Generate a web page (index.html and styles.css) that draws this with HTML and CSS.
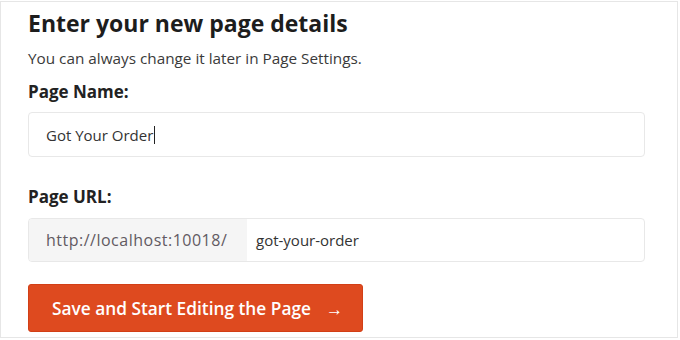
FILE: index.html
```html
<!DOCTYPE html>
<html lang="en">
<head>
    <meta charset="UTF-8">
    <title>Page details</title>
    <link rel="stylesheet" href="styles.css">
</head>
<body>
    <div class="painel">
        <h2 class="titulo">Enter your new page details</h2>
        <p class="subtitulo">You can always change it later in Page Settings.</p>

        <label class="rotulo">Page Name:</label>
        <div class="campo">
            <span class="valor">Got Your Order</span><span class="cursor"></span>
        </div>

        <label class="rotulo rotulo-url">Page URL:</label>
        <div class="campo campo-url">
            <span class="prefixo">http://localhost:10018/</span>
            <span class="valor-url">got-your-order</span>
        </div>

        <button class="salvar">Save and Start Editing the Page <span class="seta">&rarr;</span></button>
    </div>
</body>
</html>
```

FILE: styles.css
```css
body {
    margin: 0;
    padding: 0;
    background-color: #ffffff;
    font-family: "Open Sans", "Liberation Sans", sans-serif;
}

.painel {
    margin-top: 1px;
    width: 678px;
    height: 337px;
    border: 1px solid #e6e6e6;
    padding: 6px 0 0 27px;
    box-sizing: border-box;
}

.titulo {
    margin: 0;
    font-size: 23px;
    line-height: 30px;
    font-weight: 700;
    color: #1d1d1d;
}

.subtitulo {
    margin: 10px 0 0 0;
    font-size: 15.3px;
    line-height: 20px;
    color: #3a3a3a;
}

.rotulo {
    display: block;
    margin-top: 12.5px;
    font-size: 17px;
    line-height: 22px;
    font-weight: 700;
    color: #222222;
}

.rotulo-url {
    margin-top: 28.5px;
}

.campo {
    display: flex;
    align-items: center;
    margin-top: 9.5px;
    width: 617px;
    height: 45px;
    border: 1px solid #e8e8e8;
    border-radius: 4px;
    padding-left: 17px;
    box-sizing: border-box;
    font-size: 15px;
    color: #333333;
}

.cursor {
    display: inline-block;
    width: 1px;
    height: 18px;
    background-color: #222222;
    margin-left: 1px;
}

.campo-url {
    margin-top: 10.5px;
    height: 44px;
    padding-left: 0;
    overflow: hidden;
}

.prefixo {
    display: flex;
    align-items: center;
    height: 100%;
    width: 218px;
    padding-left: 17px;
    box-sizing: border-box;
    background-color: #f5f5f5;
    color: #625a62;
    font-size: 16px;
    letter-spacing: 0.5px;
}

.valor-url {
    padding-left: 9px;
}

.salvar {
    display: block;
    margin-top: 22px;
    height: 48px;
    width: 335px;
    padding: 0 0 0 23px;
    text-align: left;
    background-color: #de4a1f;
    border: 1px solid #d23f16;
    border-radius: 3px;
    color: #ffffff;
    font-family: "Open Sans", "Liberation Sans", sans-serif;
    font-size: 17.3px;
    font-weight: 600;
    cursor: pointer;
}

.seta {
    margin-left: 10px;
}
```
